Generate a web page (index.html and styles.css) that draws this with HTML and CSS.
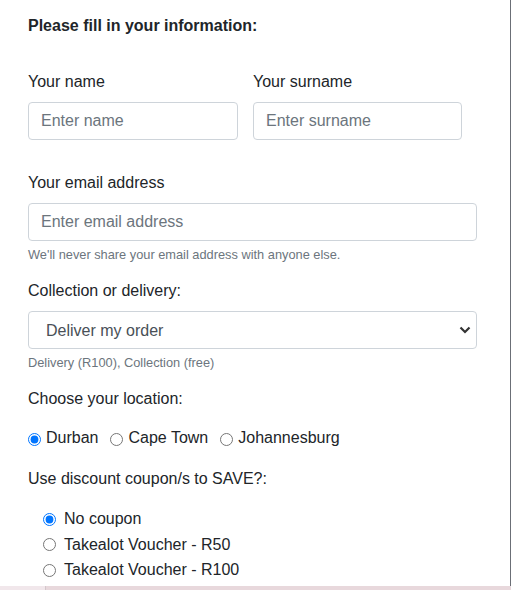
FILE: index.html
```html
<!DOCTYPE html>
<html lang="en">
<head>
<meta charset="utf-8">
<title>Order form</title>
<link rel="stylesheet" href="styles.css">
</head>
<body>
<div class="page">
  <main class="panel">
    <h1 class="title">Please fill in your information:</h1>
    <div class="row-names">
      <div class="field">
        <label class="label" for="name">Your name</label>
        <input class="control" id="name" type="text" placeholder="Enter name">
      </div>
      <div class="field">
        <label class="label" for="surname">Your surname</label>
        <input class="control" id="surname" type="text" placeholder="Enter surname">
      </div>
    </div>
    <div class="group group-email">
      <label class="label" for="email">Your email address</label>
      <input class="control wide" id="email" type="email" placeholder="Enter email address">
      <small class="hint">We'll never share your email address with anyone else.</small>
    </div>
    <div class="group group-delivery">
      <label class="label" for="delivery">Collection or delivery:</label>
      <div class="select-wrap">
        <select class="control wide select" id="delivery">
          <option>Deliver my order</option>
          <option>Collect my order</option>
        </select>
        <svg class="chevron" width="12" height="8" viewBox="0 0 12 8" aria-hidden="true"><path d="M1.5 1.5 L6 6 L10.5 1.5" fill="none" stroke="#333" stroke-width="2.2"/></svg>
      </div>
      <small class="hint">Delivery (R100), Collection (free)</small>
    </div>
    <div class="group group-location">
      <div class="label-plain">Choose your location:</div>
      <div class="inline-radios">
        <label class="radio-inline"><input type="radio" name="loc" checked><span>Durban</span></label>
        <label class="radio-inline"><input type="radio" name="loc"><span>Cape Town</span></label>
        <label class="radio-inline"><input type="radio" name="loc"><span>Johannesburg</span></label>
      </div>
    </div>
    <div class="group group-coupon">
      <div class="label-plain">Use discount coupon/s to SAVE?:</div>
      <div class="stack-radios">
        <label class="radio-row"><input type="radio" name="coupon" checked><span>No coupon</span></label>
        <label class="radio-row"><input type="radio" name="coupon"><span>Takealot Voucher - R50</span></label>
        <label class="radio-row"><input type="radio" name="coupon"><span>Takealot Voucher - R100</span></label>
      </div>
    </div>
  </main>
  <div class="footer-strip">
    <div class="strip-left"></div>
    <div class="strip-right"></div>
  </div>
</div>
</body>
</html>
```

FILE: styles.css
```css
* { box-sizing: border-box; }
html, body { margin: 0; padding: 0; }
body {
  font-family: "Liberation Sans", Arial, sans-serif;
  font-size: 16px;
  line-height: 24px;
  color: #212529;
  background: #fff;
  width: 511px;
  height: 590px;
  overflow: hidden;
}
.page {
  display: flex;
  flex-direction: column;
  height: 590px;
}
.panel {
  height: 586px;
  width: 511px;
  border-right: 1px solid #6b6f76;
  padding: 14px 0 0 28px;
  overflow: hidden;
}
.title {
  margin: 0;
  font-size: 16px;
  line-height: 24px;
  font-weight: bold;
}
.row-names {
  margin-top: 32px;
  display: grid;
  grid-template-columns: 210px 209px;
  column-gap: 15px;
}
.field { display: flex; flex-direction: column; }
.label, .label-plain {
  display: block;
  margin-bottom: 8px;
  line-height: 24px;
}
.control {
  display: block;
  height: 38px;
  width: 100%;
  padding: 0 12px;
  font-family: inherit;
  font-size: 16px;
  color: #495057;
  background: #fff;
  border: 1px solid #ced4da;
  border-radius: 4px;
  outline: none;
}
.control::placeholder { color: #6c757d; opacity: 1; }
.wide { width: 449px; }
.group-email { margin-top: 31px; }
.hint {
  display: block;
  margin-top: 4px;
  font-size: 12.8px;
  line-height: 19.2px;
  color: #6c757d;
}
.group-delivery { margin-top: 15px; }
.select-wrap { position: relative; width: 449px; }
.select {
  appearance: none;
  -webkit-appearance: none;
  padding-left: 17px;
  color: #495057;
}
.chevron {
  position: absolute;
  right: 6px;
  top: 15px;
}
.group-location { margin-top: 15px; }
.group-location .label-plain { margin-bottom: 15px; }
.inline-radios { display: flex; }
.radio-inline {
  display: inline-flex;
  align-items: center;
  margin-right: 12px;
  height: 24px;
}
.radio-inline input {
  margin: 2px 5px 0 0;
  width: 13px;
  height: 13px;
}
.group-coupon { margin-top: 17px; }
.group-coupon .label-plain { margin-bottom: 15px; }
.stack-radios {
  display: flex;
  flex-direction: column;
  padding-left: 15px;
}
.radio-row {
  display: flex;
  align-items: center;
  height: 25.5px;
}
.radio-row input {
  margin: 0 8px 0 0;
  width: 13px;
  height: 13px;
}
.footer-strip {
  display: flex;
  height: 4px;
}
.strip-left {
  width: 46px;
  background: #f1e7eb;
  border-right: 1px solid #d3c7cb;
}
.strip-right {
  flex: 1;
  background: #e8d8dc;
}
```
